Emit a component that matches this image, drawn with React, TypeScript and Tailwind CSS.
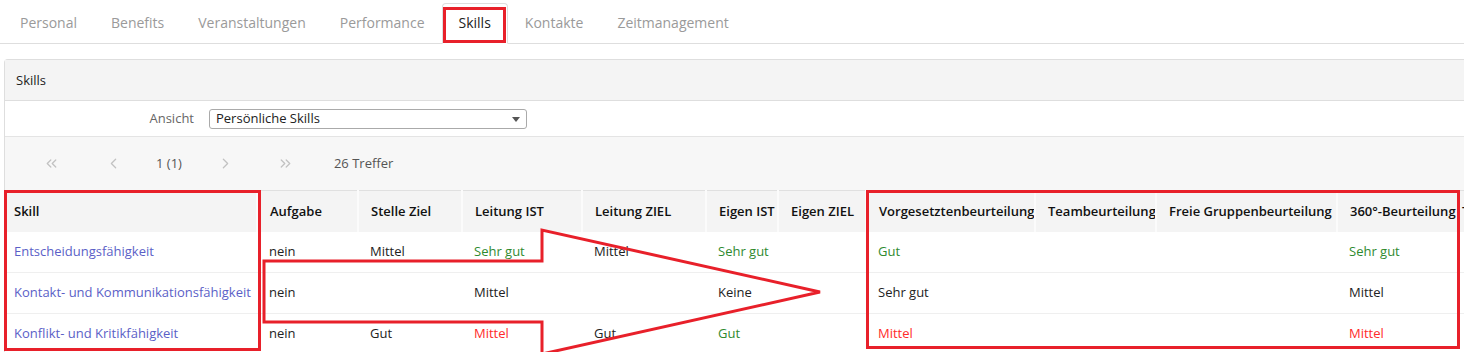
import React from "react";
import { ChevronsLeft, ChevronLeft, ChevronRight, ChevronsRight } from "lucide-react";

const GREEN = "text-[#2f8a2f]";
const RED = "text-[#ff2b2b]";
const DARK = "text-[#222]";

type Cell = { t: string; c?: string };

const cols: { h: string; w: number }[] = [
  { h: "Skill", w: 252 },
  { h: "Aufgabe", w: 101 },
  { h: "Stelle Ziel", w: 104 },
  { h: "Leitung IST", w: 120 },
  { h: "Leitung ZIEL", w: 124 },
  { h: "Eigen IST", w: 72 },
  { h: "Eigen ZIEL", w: 88 },
  { h: "Vorgesetztenbeurteilung", w: 169 },
  { h: "Teambeurteilung", w: 121 },
  { h: "Freie Gruppenbeurteilung", w: 181 },
  { h: "360°-Beurteilung", w: 122 },
  { h: "Trend", w: 100 },
];

const rows: Cell[][] = [
  [
    { t: "Entscheidungsfähigkeit", c: "text-[#5b5fc7]" },
    { t: "nein" },
    { t: "Mittel" },
    { t: "Sehr gut", c: GREEN },
    { t: "Mittel" },
    { t: "Sehr gut", c: GREEN },
    { t: "" },
    { t: "Gut", c: GREEN },
    { t: "" },
    { t: "" },
    { t: "Sehr gut", c: GREEN },
    { t: "" },
  ],
  [
    { t: "Kontakt- und Kommunikationsfähigkeit", c: "text-[#5b5fc7]" },
    { t: "nein" },
    { t: "" },
    { t: "Mittel" },
    { t: "" },
    { t: "Keine" },
    { t: "" },
    { t: "Sehr gut" },
    { t: "" },
    { t: "" },
    { t: "Mittel" },
    { t: "" },
  ],
  [
    { t: "Konflikt- und Kritikfähigkeit", c: "text-[#5b5fc7]" },
    { t: "nein" },
    { t: "Gut" },
    { t: "Mittel", c: RED },
    { t: "Gut" },
    { t: "Gut", c: GREEN },
    { t: "" },
    { t: "Mittel", c: RED },
    { t: "" },
    { t: "" },
    { t: "Mittel", c: RED },
    { t: "" },
  ],
];

const tabs = ["Personal", "Benefits", "Veranstaltungen", "Performance", "Skills", "Kontakte", "Zeitmanagement"];

export default function App() {
  return (
    <div
      className="relative w-[1464px] h-[352px] overflow-hidden bg-white text-[13px] text-[#222]"
      style={{ fontFamily: '"Open Sans", "Noto Sans", Arial, sans-serif' }}
    >
      {/* Tabs */}
      <div className="flex h-[44px] items-end border-b border-[#dedede] pl-[3px]">
        {tabs.map((t) => (
          <div
            key={t}
            className={
              t === "Skills"
                ? "-mb-px flex h-[41px] items-center rounded-t-[4px] border border-b-white border-[#dedede] bg-white px-[16px] pb-[3px] text-[14px] text-[#222]"
                : "-mb-px flex h-[41px] items-center border border-transparent px-[16px] pb-[3px] text-[14px] text-[#9a9a9a]"
            }
          >
            {t}
          </div>
        ))}
      </div>

      {/* Panel */}
      <div className="ml-[4px] mt-[15px] w-[1520px] rounded-tl-[4px] border-l border-t border-[#dedede]">
        <div className="flex h-[41px] items-center border-b border-[#dedede] bg-[#f4f4f4] pl-[11px] pt-[1px] text-[13px] text-[#222]">
          Skills
        </div>
        <div className="flex h-[36px] items-center border-b border-[#e4e4e4] bg-white">
          <div className="w-[204px] pr-[15px] text-right text-[#666]">Ansicht</div>
          <div className="relative flex h-[20px] w-[318px] items-center rounded-[3px] border border-[#aaa] pl-[6px] text-[#222]">
            Persönliche Skills
            <span className="absolute right-[6px] top-[7px] h-0 w-0 border-x-[4px] border-t-[5px] border-x-transparent border-t-[#555]" />
          </div>
        </div>
        <div className="flex h-[53px] items-center bg-[#f7f7f7] text-[#555]">
          <ChevronsLeft className="ml-[38px] h-[17px] w-[17px] text-[#c2c2c2]" strokeWidth={1.8} />
          <ChevronLeft className="ml-[45px] h-[17px] w-[17px] text-[#c2c2c2]" strokeWidth={1.8} />
          <span className="ml-[34px]">1 (1)</span>
          <ChevronRight className="ml-[35px] h-[17px] w-[17px] text-[#c2c2c2]" strokeWidth={1.8} />
          <ChevronsRight className="ml-[43px] h-[17px] w-[17px] text-[#c2c2c2]" strokeWidth={1.8} />
          <span className="ml-[40px]">26 Treffer</span>
        </div>

        <table className="table-fixed border-collapse border-t border-[#e0e0e0]" style={{ width: 1554 }}>
          <colgroup>
            {cols.map((c) => (
              <col key={c.h} style={{ width: c.w }} />
            ))}
          </colgroup>
          <thead>
            <tr className="h-[41px] bg-[#f4f4f4]">
              {cols.map((c, i) => (
                <th
                  key={c.h}
                  className={
                    (i === 0 ? "pl-[9px] " : i === 11 ? "pl-[2px] " : "pl-[12px] ") +
                    "overflow-hidden whitespace-nowrap border-r-2 border-[#fbfbfb] text-left font-semibold text-[#111]"
                  }
                >
                  {c.h}
                </th>
              ))}
            </tr>
          </thead>
          <tbody>
            {rows.map((r, ri) => (
              <tr key={ri} className="h-[41px] border-b border-[#efefef]">
                {r.map((c, ci) => (
                  <td
                    key={ci}
                    className={
                      (ci === 0 ? "pl-[9px] " : "pl-[12px] ") +
                      "overflow-hidden whitespace-nowrap " +
                      (c.c ?? DARK)
                    }
                  >
                    {c.t}
                  </td>
                ))}
              </tr>
            ))}
          </tbody>
        </table>
      </div>

      {/* Annotations */}
      <div className="pointer-events-none absolute left-[443px] top-[7px] h-[36px] w-[63px] border-[3px] border-[#e8202a]" />
      <div className="pointer-events-none absolute left-[4px] top-[190px] h-[161px] w-[257px] border-[3px] border-[#e8202a]" />
      <div className="pointer-events-none absolute left-[866px] top-[190px] h-[159px] w-[594px] border-[3px] border-[#e8202a]" />
      <svg className="pointer-events-none absolute left-0 top-0" width="1464" height="352">
        <polygon
          points="264,261 542,261 542,230 820,292 542,354 542,322 264,322"
          fill="none"
          stroke="#e8202a"
          strokeWidth="3"
        />
      </svg>
    </div>
  );
}
